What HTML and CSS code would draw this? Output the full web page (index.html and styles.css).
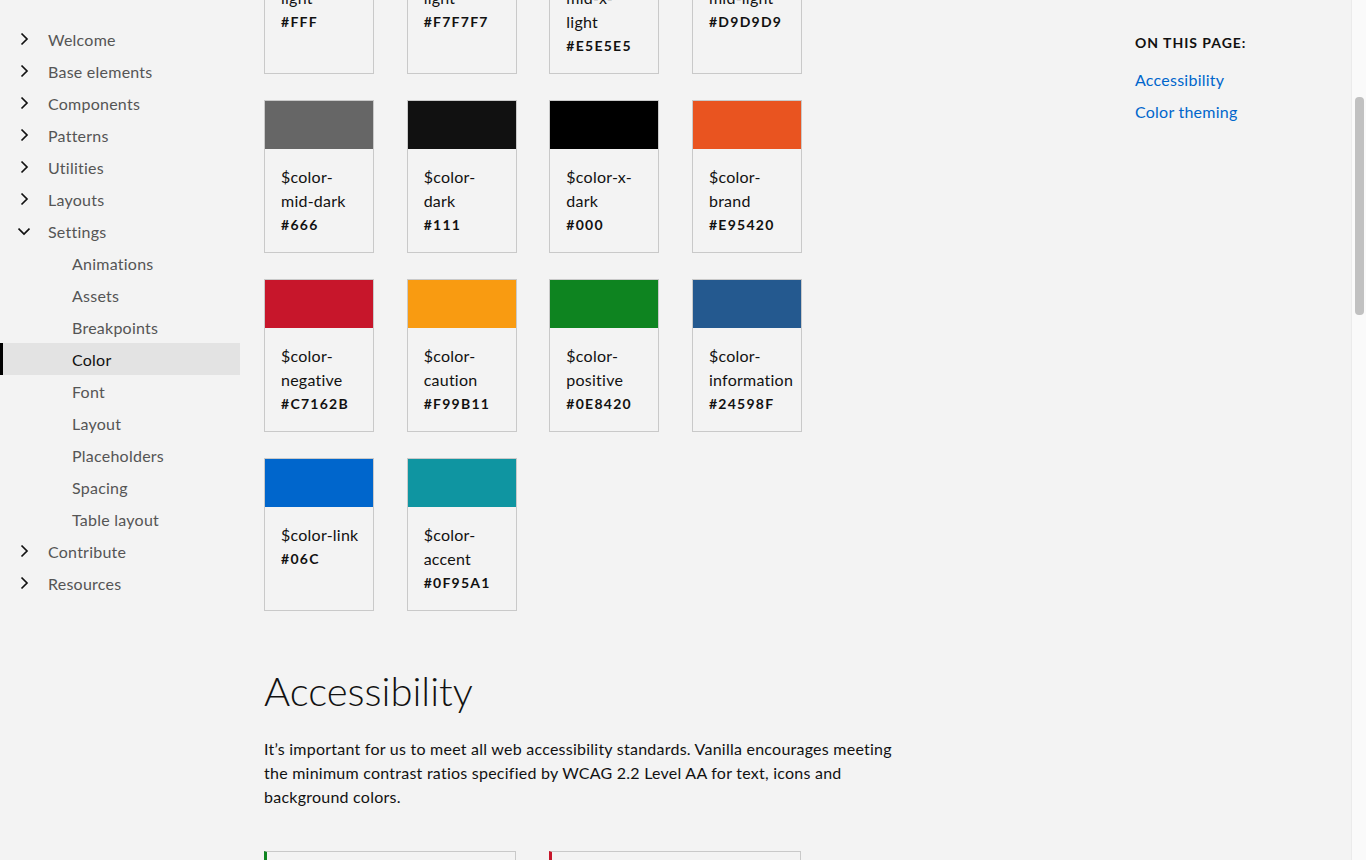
FILE: index.html
```html
<!DOCTYPE html>
<html lang="en">
<head>
<meta charset="utf-8">
<title>Color | Vanilla documentation</title>
<link rel="stylesheet" href="styles.css">
</head>
<body>
<div class="page">
  <nav class="sidenav">
    <ul class="nav-list">
      <li><a class="nav-link"><svg class="chev" viewBox="0 0 12 14"><polyline points="3.5,1.5 9,7 3.5,12.5"/></svg>Welcome</a></li>
      <li><a class="nav-link"><svg class="chev" viewBox="0 0 12 14"><polyline points="3.5,1.5 9,7 3.5,12.5"/></svg>Base elements</a></li>
      <li><a class="nav-link"><svg class="chev" viewBox="0 0 12 14"><polyline points="3.5,1.5 9,7 3.5,12.5"/></svg>Components</a></li>
      <li><a class="nav-link"><svg class="chev" viewBox="0 0 12 14"><polyline points="3.5,1.5 9,7 3.5,12.5"/></svg>Patterns</a></li>
      <li><a class="nav-link"><svg class="chev" viewBox="0 0 12 14"><polyline points="3.5,1.5 9,7 3.5,12.5"/></svg>Utilities</a></li>
      <li><a class="nav-link"><svg class="chev" viewBox="0 0 12 14"><polyline points="3.5,1.5 9,7 3.5,12.5"/></svg>Layouts</a></li>
      <li>
        <a class="nav-link"><svg class="chev" viewBox="0 0 12 14"><polyline points="0.5,4.5 6,10 11.5,4.5"/></svg>Settings</a>
        <ul class="sub-list">
          <li><a class="sub-link">Animations</a></li>
          <li><a class="sub-link">Assets</a></li>
          <li><a class="sub-link">Breakpoints</a></li>
          <li><a class="sub-link is-active">Color</a></li>
          <li><a class="sub-link">Font</a></li>
          <li><a class="sub-link">Layout</a></li>
          <li><a class="sub-link">Placeholders</a></li>
          <li><a class="sub-link">Spacing</a></li>
          <li><a class="sub-link">Table layout</a></li>
        </ul>
      </li>
      <li><a class="nav-link"><svg class="chev" viewBox="0 0 12 14"><polyline points="3.5,1.5 9,7 3.5,12.5"/></svg>Contribute</a></li>
      <li><a class="nav-link"><svg class="chev" viewBox="0 0 12 14"><polyline points="3.5,1.5 9,7 3.5,12.5"/></svg>Resources</a></li>
    </ul>
  </nav>

  <main class="main">
    <div class="swatches">
      <div class="card"><div class="swatch c-xlight"></div><div class="card-body"><p class="name">$color-x-<br>light</p><p class="hex">#FFF</p></div></div>
      <div class="card"><div class="swatch c-light"></div><div class="card-body"><p class="name">$color-<br>light</p><p class="hex">#F7F7F7</p></div></div>
      <div class="card"><div class="swatch c-midxlight"></div><div class="card-body"><p class="name">$color-<br>mid-x-<br>light</p><p class="hex">#E5E5E5</p></div></div>
      <div class="card"><div class="swatch c-midlight"></div><div class="card-body"><p class="name">$color-<br>mid-light</p><p class="hex">#D9D9D9</p></div></div>

      <div class="card"><div class="swatch c-middark"></div><div class="card-body"><p class="name">$color-<br>mid-dark</p><p class="hex">#666</p></div></div>
      <div class="card"><div class="swatch c-dark"></div><div class="card-body"><p class="name">$color-<br>dark</p><p class="hex">#111</p></div></div>
      <div class="card"><div class="swatch c-xdark"></div><div class="card-body"><p class="name">$color-x-<br>dark</p><p class="hex">#000</p></div></div>
      <div class="card"><div class="swatch c-brand"></div><div class="card-body"><p class="name">$color-<br>brand</p><p class="hex">#E95420</p></div></div>

      <div class="card"><div class="swatch c-negative"></div><div class="card-body"><p class="name">$color-<br>negative</p><p class="hex">#C7162B</p></div></div>
      <div class="card"><div class="swatch c-caution"></div><div class="card-body"><p class="name">$color-<br>caution</p><p class="hex">#F99B11</p></div></div>
      <div class="card"><div class="swatch c-positive"></div><div class="card-body"><p class="name">$color-<br>positive</p><p class="hex">#0E8420</p></div></div>
      <div class="card"><div class="swatch c-information"></div><div class="card-body"><p class="name">$color-<br>information</p><p class="hex">#24598F</p></div></div>

      <div class="card"><div class="swatch c-link"></div><div class="card-body"><p class="name">$color-link</p><p class="hex">#06C</p></div></div>
      <div class="card"><div class="swatch c-accent"></div><div class="card-body"><p class="name">$color-<br>accent</p><p class="hex">#0F95A1</p></div></div>
    </div>

    <h2 class="heading">Accessibility</h2>
    <p class="lead">It’s important for us to meet all web accessibility standards. Vanilla encourages meeting the minimum contrast ratios specified by WCAG 2.2 Level AA for text, icons and background colors.</p>

    <div class="notes">
      <div class="note note-positive"></div>
      <div class="note note-negative"></div>
    </div>
  </main>

  <aside class="toc">
    <h4 class="toc-title">On this page:</h4>
    <a class="toc-link">Accessibility</a>
    <a class="toc-link">Color theming</a>
  </aside>

  <div class="scrollbar"><div class="thumb"></div></div>
</div>
</body>
</html>
```

FILE: styles.css
```css
* { box-sizing: border-box; }

html, body {
  margin: 0;
  height: 100%;
  overflow: hidden;
  background: #f3f3f3;
  font-family: Lato, "Liberation Sans", sans-serif;
  color: #111;
  letter-spacing: 0.015em;
}

.page {
  display: grid;
  grid-template-columns: 240px 1fr 216px 15px;
  height: 860px;
}

/* Side navigation */
.sidenav {
  padding-top: 23px;
}
.nav-list, .sub-list {
  list-style: none;
  margin: 0;
  padding: 0;
}
.nav-link {
  display: flex;
  align-items: center;
  height: 32px;
  font-size: 16px;
  color: #555;
}
.chev {
  width: 12px;
  height: 14px;
  margin-left: 18px;
  margin-right: 18px;
  fill: none;
  stroke: #111;
  stroke-width: 1.7;
}
.sub-link {
  display: flex;
  align-items: center;
  height: 32px;
  padding-left: 72px;
  font-size: 16px;
  color: #555;
}
.sub-link.is-active {
  background: #e3e3e3;
  border-left: 3px solid #000;
  padding-left: 69px;
  color: #111;
}

/* Main column */
.main {
  padding-left: 24px;
  overflow: hidden;
}
.swatches {
  display: grid;
  grid-template-columns: repeat(4, 110px);
  column-gap: 32.67px;
  row-gap: 26px;
  margin-top: -103px;
}
.card {
  border: 1px solid #c9c9c9;
  display: flex;
  flex-direction: column;
}
.swatch { height: 48px; }
.c-xlight { background: #fff; }
.c-light { background: #f7f7f7; }
.c-midxlight { background: #e5e5e5; }
.c-midlight { background: #d9d9d9; }
.c-middark { background: #666; }
.c-dark { background: #111; }
.c-xdark { background: #000; }
.c-brand { background: #e95420; }
.c-negative { background: #c7162b; }
.c-caution { background: #f99b11; }
.c-positive { background: #0e8420; }
.c-information { background: #24598f; }
.c-link { background: #06c; }
.c-accent { background: #0f95a1; }

.card-body {
  padding: 16px 8px 15px 16px;
}
.name {
  margin: 0;
  font-size: 16px;
  line-height: 24px;
  white-space: nowrap;
  color: #111;
}
.hex {
  margin: 0;
  font-size: 14px;
  line-height: 24px;
  font-weight: 700;
  letter-spacing: 0.09em;
  color: #111;
}

.heading {
  margin: 56px 0 22px;
  font-size: 40px;
  line-height: 48px;
  font-weight: 300;
  letter-spacing: 0;
  color: #111;
}
.lead {
  margin: 0 0 42px;
  max-width: 640px;
  font-size: 16px;
  line-height: 24px;
  color: #111;
}
.notes {
  display: grid;
  grid-template-columns: 252px 252px;
  column-gap: 33px;
}
.note {
  height: 100px;
  border: 1px solid #c9c9c9;
}
.note-positive { border-left: 3px solid #0e8420; }
.note-negative { border-left: 3px solid #c7162b; }

/* Table of contents */
.toc {
  padding-top: 33px;
  display: flex;
  flex-direction: column;
  align-items: flex-start;
}
.toc-title {
  margin: 0 0 15px;
  font-size: 14px;
  line-height: 20px;
  font-weight: 700;
  letter-spacing: 0.07em;
  text-transform: uppercase;
  color: #111;
}
.toc-link {
  font-size: 16px;
  line-height: 24px;
  margin-bottom: 8px;
  color: #06c;
}

/* Scrollbar */
.scrollbar {
  background: #fafafa;
  border-left: 1px solid #ebebeb;
  padding: 97px 2px 0 3px;
}
.thumb {
  height: 218px;
  background: #c1c1c1;
  border-radius: 4px;
}
```
